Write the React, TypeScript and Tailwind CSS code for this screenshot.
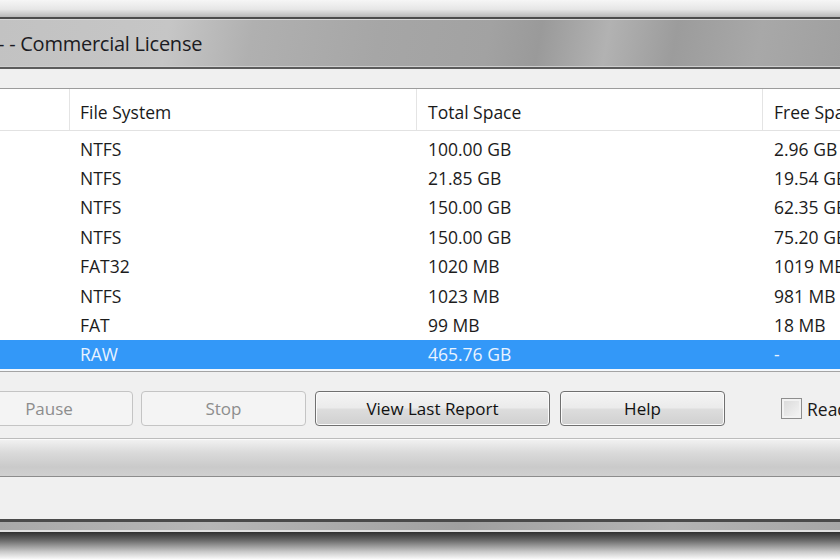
import React from 'react'

const rows = [
  { fs: 'NTFS', total: '100.00 GB', free: '2.96 GB' },
  { fs: 'NTFS', total: '21.85 GB', free: '19.54 GB' },
  { fs: 'NTFS', total: '150.00 GB', free: '62.35 GB' },
  { fs: 'NTFS', total: '150.00 GB', free: '75.20 GB' },
  { fs: 'FAT32', total: '1020 MB', free: '1019 MB' },
  { fs: 'NTFS', total: '1023 MB', free: '981 MB' },
  { fs: 'FAT', total: '99 MB', free: '18 MB' },
  { fs: 'RAW', total: '465.76 GB', free: '-' },
]

const selected = 7

function Button({ label, width, disabled }: { label: string; width: string; disabled?: boolean }) {
  return (
    <button
      className={`${width} h-[35px] shrink-0 rounded-[4px] border text-[17px] flex items-center justify-center ${
        disabled
          ? 'border-[#c4c4c4] bg-[#f4f4f4] text-[#8d8d8d]'
          : 'border-[#707070] bg-[linear-gradient(to_bottom,#f4f4f4,#ebebeb_48%,#dddddd_52%,#d0d0d0)] text-[#111] shadow-[inset_0_0_0_1px_#fbfbfb]'
      }`}
    >
      {label}
    </button>
  )
}

export default function App() {
  return (
    <div className="w-[840px] h-[560px] overflow-hidden flex flex-col bg-white font-['Open_Sans',sans-serif]">
      {/* window edge above */}
      <div className="h-[17px] shrink-0 bg-[linear-gradient(to_bottom,#f6f6f6,#e6e6e6_55%,#b8b8b8)]" />
      <div className="h-[2px] shrink-0 bg-[#4c4c4c]" />
      <div className="h-px shrink-0 bg-[#d6d6d6]" />

      {/* Title bar */}
      <div className="h-[46px] shrink-0 flex items-center pt-px bg-[linear-gradient(100deg,#c2c2c2_0%,#c6c6c6_20%,#b0b0b0_30%,#a6a6a6_45%,#a2a2a2_58%,#9a9a9a_64%,#b2b2b2_72%,#9c9c9c_80%,#a8a8a8_90%,#a0a0a0_100%)]">
        <span className="-ml-[2px] text-[20px] text-[#1b1b22] whitespace-nowrap tracking-[-0.25px]">
          - - Commercial License
        </span>
      </div>
      <div className="h-px shrink-0 bg-[#cfcfcf]" />
      <div className="h-[2px] shrink-0 bg-[#5c5c5c]" />

      {/* menu strip */}
      <div className="h-[19px] shrink-0 bg-[#f0f0f0]" />
      <div className="h-px shrink-0 bg-[#9c9c9c]" />

      {/* header */}
      <div className="h-[42px] shrink-0 grid grid-cols-[70px_347px_346px_1fr] bg-white border-b border-[#e2e2e2] text-[17.5px] text-[#1a1a1a]">
        <div className="border-r border-[#e4e4e4]" />
        <div className="border-r border-[#e4e4e4] pl-[10px] flex items-center pt-[5px] whitespace-nowrap">File System</div>
        <div className="border-r border-[#e4e4e4] pl-[11px] flex items-center pt-[5px] whitespace-nowrap">Total Space</div>
        <div className="pl-[11px] flex items-center pt-[5px] whitespace-nowrap">Free Space</div>
      </div>

      {/* rows */}
      <div className="shrink-0 flex flex-col pt-[3px] bg-white text-[17.5px]">
        {rows.map((r, i) => (
          <div
            key={i}
            className={`h-[29.4px] grid grid-cols-[70px_347px_346px_1fr] items-center whitespace-nowrap ${
              i === selected ? 'bg-[#3398f8] text-[#e9f3ff]' : 'text-[#1c1c1c]'
            }`}
          >
            <div />
            <div className="pl-[10px]">{r.fs}</div>
            <div className="pl-[11px]">{r.total}</div>
            <div className="pl-[11px]">{r.free}</div>
          </div>
        ))}
      </div>
      <div className="h-[2px] shrink-0 bg-[#f4f8fc]" />
      <div className="h-px shrink-0 bg-[#a4a4a4]" />

      {/* buttons panel */}
      <div className="h-[66px] shrink-0 bg-[#f0f0f0] flex items-start pt-[19px] -ml-[35px]">
        <div className="flex items-center">
          <Button label="Pause" width="w-[168px]" disabled />
          <div className="w-[8px] shrink-0" />
          <Button label="Stop" width="w-[165px]" disabled />
          <div className="w-[9px] shrink-0" />
          <Button label="View Last Report" width="w-[235px]" />
          <div className="w-[10px] shrink-0" />
          <Button label="Help" width="w-[165px]" />
          <div className="w-[56px] shrink-0" />
          <div className="w-[21px] h-[21px] shrink-0 border border-[#8e8e8e] bg-[linear-gradient(135deg,#d8d8d8,#f6f6f6)] shadow-[inset_0_0_0_2px_#f2f2f2]" />
          <span className="ml-[5px] text-[17.5px] text-[#1a1a1a] whitespace-nowrap">Read-only</span>
        </div>
      </div>
      <div className="h-px shrink-0 bg-[#bcbcbc]" />
      <div className="h-px shrink-0 bg-[#fafafa]" />

      {/* status bar */}
      <div className="h-[36px] shrink-0 bg-[linear-gradient(to_bottom,#f1f1f1,#dadada_35%,#cacaca_75%,#d0d0d0)]" />
      <div className="h-px shrink-0 bg-[#8c8c8c]" />
      <div className="h-[42px] shrink-0 bg-[#f0f0f0]" />

      {/* window frame bottom */}
      <div className="h-[3px] shrink-0 bg-[#4a4a4a]" />
      <div className="h-[8px] shrink-0 bg-[linear-gradient(90deg,#a8a8a8,#b6b6b6_25%,#a0a0a0_55%,#b4b4b4_80%,#a6a6a6)]" />
      <div className="h-[2px] shrink-0 bg-[#e2e2e2]" />
      <div className="flex-1 bg-[linear-gradient(to_bottom,#303030,#6a6a6a_30%,#c8c8c8_70%,#ffffff)]" />
    </div>
  )
}
